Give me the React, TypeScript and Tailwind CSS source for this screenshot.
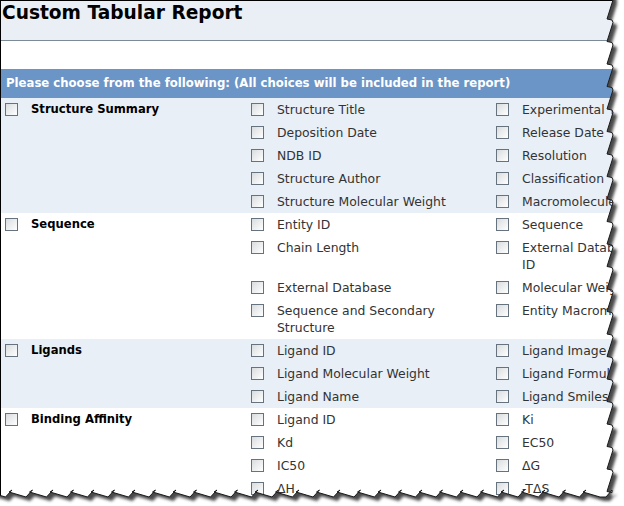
import React from "react";

type Item = string | string[];
type Section = { title: string; shaded: boolean; rows: [Item, Item][] };

const sections: Section[] = [
  {
    title: "Structure Summary",
    shaded: true,
    rows: [
      ["Structure Title", "Experimental Technique"],
      ["Deposition Date", "Release Date"],
      ["NDB ID", "Resolution"],
      ["Structure Author", "Classification"],
      ["Structure Molecular Weight", "Macromolecule Type"],
    ],
  },
  {
    title: "Sequence",
    shaded: false,
    rows: [
      ["Entity ID", "Sequence"],
      ["Chain Length", ["External Database", "ID"]],
      ["External Database", "Molecular Weight"],
      ["Sequence and Secondary Structure", "Entity Macromolecule Type"],
    ],
  },
  {
    title: "Ligands",
    shaded: true,
    rows: [
      ["Ligand ID", "Ligand Image"],
      ["Ligand Molecular Weight", "Ligand Formula"],
      ["Ligand Name", "Ligand Smiles"],
    ],
  },
  {
    title: "Binding Affinity",
    shaded: false,
    rows: [
      ["Ligand ID", "Ki"],
      ["Kd", "EC50"],
      ["IC50", "ΔG"],
      ["ΔH", "-TΔS"],
    ],
  },
];

const Box = () => (
  <span className="mt-[2px] h-[13px] w-[13px] shrink-0 border border-[#66727e] bg-gradient-to-br from-[#d9dcde] to-white" />
);

const Choice = ({ label, bold, wide }: { label: Item; bold?: boolean; wide?: boolean }) => (
  <div className="flex items-start pl-[4px]">
    <Box />
    <span
      className={
        "ml-[13px] leading-[17px] " +
        (bold ? "text-[11.6px] font-bold text-black " : "text-[12.4px] text-[#333] ") +
        (wide ? "w-[200px]" : "whitespace-nowrap")
      }
    >
      {Array.isArray(label)
        ? label.map((l, i) => (
            <React.Fragment key={i}>
              {i > 0 && <br />}
              {l}
            </React.Fragment>
          ))
        : label}
    </span>
  </div>
);

// torn paper edge, drawn over the right and bottom of the page
const tornPath = () => {
  const pts: string[] = ["-20,-20", "612,-20"];
  for (let y = 0; y < 486; y += 22.5) {
    pts.push(`613,${y}`, `607,${y + 19}`, `612,${y + 20}`);
  }
  pts.push("612,490", "606,497");
  for (let x = 600; x > 0; x -= 20.5) {
    pts.push(`${x},497`, `${x - 17},492`, `${x - 14},490`);
  }
  pts.push("0,490", "-20,490");
  return "M" + pts.join(" L") + " Z";
};

const TornEdge = () => {
  const p = tornPath();
  return (
    <svg className="pointer-events-none absolute left-0 top-0" width="624" height="506">
      <defs>
        <filter id="blur" x="-10%" y="-10%" width="120%" height="120%">
          <feGaussianBlur stdDeviation="1.6" />
        </filter>
        <mask id="outside">
          <rect x="0" y="0" width="624" height="506" fill="white" />
          <path d={p} fill="black" />
        </mask>
      </defs>
      <path d={"M-50,-50 H700 V600 H-50 Z " + p} fill="white" fillRule="evenodd" />
      <g mask="url(#outside)">
        <path d={p} transform="translate(4,4)" fill="#4a4a4a" filter="url(#blur)" />
      </g>
      <path d={p} fill="none" stroke="#1a1a1a" strokeWidth="1" />
    </svg>
  );
};

export default function App() {
  return (
    <div
      className="relative h-[506px] w-[624px] overflow-hidden bg-white"
      style={{ fontFamily: '"DejaVu Sans", Verdana, sans-serif' }}
    >
      <div className="w-[720px] border-l border-t border-black">
        <div className="h-[40px] border-b border-[#7d8b98] bg-[#e9eff5] pl-[1px] pt-[1px]">
          <h1 className="text-[18.6px] font-bold leading-[22px] text-black">Custom Tabular Report</h1>
        </div>
        <div className="h-[28px]" />
        <div className="flex h-[29px] items-center bg-[#6b95c6] pl-[5px] pt-[1px] text-[11.7px] font-bold text-white">
          Please choose from the following: (All choices will be included in the report)
        </div>
        {sections.map((s) => (
          <div key={s.title} className={s.shaded ? "bg-[#e9eff6]" : "bg-white"}>
            {s.rows.map((r, i) => (
              <div key={i} className="grid grid-cols-[246px_245px_1fr] py-[3px]">
                <div>{i === 0 && <Choice label={s.title} bold />}</div>
                <Choice label={r[0]} wide />
                <Choice label={r[1]} />
              </div>
            ))}
          </div>
        ))}
      </div>
      <TornEdge />
    </div>
  );
}
